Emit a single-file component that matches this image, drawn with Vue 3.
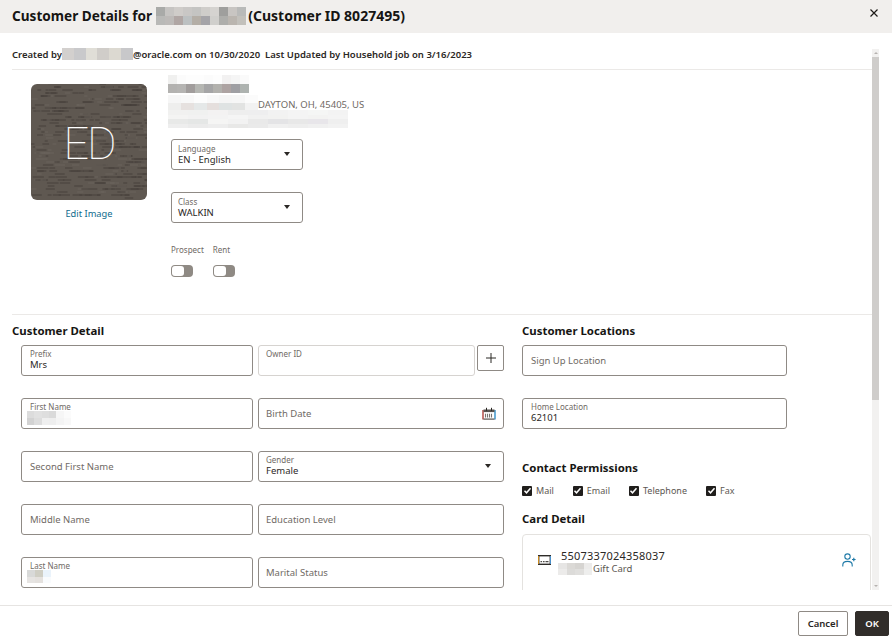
<script setup>
import { ref } from 'vue';

const grain = [];
let seed = 7;
const rnd = () => {
    seed = (seed * 16807) % 2147483647;
    return seed / 2147483647;
};
for (let i = 0; i < 420; i++) {
    const x = rnd() * 116;
    const y = Math.round(rnd() * 38) * 3;
    grain.push({
        x1: x,
        y1: y,
        x2: x + 3 + rnd() * 9,
        y2: y,
        color: rnd() > 0.3 ? '#45403b' : '#6b645d',
    });
}

const titleBlur = [
    '#a9aaa8', '#c6c4c2', '#cfccc9', '#c9c7c5', '#c4c4c2', '#cfcdca', '#d5d3d0', '#9f9f9d', '#c8c5c2', '#b9bab9',
    '#b9b9b7', '#bdbab8', '#b0a6a4', '#bcc0c1', '#b4aea6', '#a5a4a8', '#d0cfcc', '#aeaeab', '#bab5af', '#c2c0bb',
];
const creatorBlur = ['#d3d0ce', '#c9c9cb', '#e0ded7', '#d0cdc9', '#dcd9d1', '#c8c8ca'];
const nameBlur = [
    '#f0f0ef', '#fbfbfb', '#fdfdfd', '#fdfdfd', '#fbfbfb', '#fdfdfd', '#f2f1f1', '#f5f5f5', '#fafafa',
    '#b3b2b0', '#b5b4b2', '#a19d9c', '#b5b6b2', '#a5a5a6', '#b2b1ad', '#ada3a2', '#9f9fa3', '#aeb3b0',
];
const addressBlur = [
    '#f6f6f6', '#f8f8f8', '#fcfcfc', '#f8f8f8', '#f5f5f5', '#f6f6f6', '#fbfbfb',
    '#eeeeed', '#e6e1df', '#e5e8e8', '#e5dfdd', '#dfe3e3', '#e2e3e2', '#f2f2f2',
];
const streetBlur = [
    '#f1f1f0', '#f0f1f0', '#f3f2f2', '#eeeeee', '#eeeeef', '#f2f2f2', '#f4f4f4', '#f5f6f5', '#f3f3f3',
    '#f4f4f3', '#f2f2f2', '#f3f3f3', '#f5f5f5', '#f1f1f1', '#f2f2f1', '#f4f4f4', '#f3f3f2', '#f4f4f4',
    '#e8e9e8', '#e5e7e6', '#f5f5f4', '#f2f2f2', '#e9e9e9', '#e4e4e6', '#e8e8e8', '#e8e6ea', '#efefef',
    '#eeeeee', '#ebebeb', '#ededed', '#e8e8e7', '#eaeaea', '#f0f0f0', '#eeeeee', '#f0f0f0', '#f2f2f2',
];
const firstNameBlur = ['#dcdcdc', '#e1e1e1', '#dedede', '#dadada', '#f6f6f6', '#fbfbfb', '#d2d2d2', '#dddddd', '#efefef', '#eeeeee', '#f4f4f4', '#f8f8f8'];
const lastNameBlur = ['#d8d9d8', '#cfcec4', '#eaf3fb', '#e6e4e2', '#e4e1de', '#f9fbfd'];
const cardBlur = ['#e6e5e4', '#dbd9d6', '#d6d4d1', '#ecebea', '#ecebea', '#dcdbd9', '#e0dfdd', '#eeeeed'];

const permissions = ref(['Mail', 'Email', 'Telephone', 'Fax']);
</script>

<template>
    <div class="dialog">
        <header class="dialog-header">
            <h1>Customer Details for</h1>
            <div class="mosaic title-blur">
                <i v-for="(c, i) in titleBlur" :key="i" :style="{ background: c }"></i>
            </div>
            <h1 class="title-id">(Customer ID 8027495)</h1>
            <svg class="close" viewBox="0 0 10 10" width="10" height="10">
                <path d="M1.5 1.5l7 7M8.5 1.5l-7 7" stroke="#1d1a17" stroke-width="1.2" fill="none" />
            </svg>
        </header>

        <div class="dialog-body">
            <div class="scroll-area">
                <div class="meta-line">
                    <span>Created by</span>
                    <div class="mosaic creator-blur">
                        <i v-for="(c, i) in creatorBlur" :key="i" :style="{ background: c }"></i>
                    </div>
                    <span>@oracle.com on 10/30/2020</span>
                    <span class="meta-updated">Last Updated by Household job on 3/16/2023</span>
                </div>

                <section class="profile">
                    <div class="avatar-col">
                        <div class="avatar">
                            <svg viewBox="0 0 116 116" width="116" height="116">
                                <line v-for="(g, i) in grain" :key="i" :x1="g.x1" :y1="g.y1" :x2="g.x2" :y2="g.y2" :stroke="g.color" stroke-width="0.9" />
                            </svg>
                            <span>ED</span>
                        </div>
                        <a class="edit-image">Edit Image</a>
                    </div>
                    <div class="profile-info">
                        <div class="mosaic name-blur">
                            <i v-for="(c, i) in nameBlur" :key="i" :style="{ background: c }"></i>
                        </div>
                        <div class="address-row">
                            <div class="mosaic address-blur">
                                <i v-for="(c, i) in addressBlur" :key="i" :style="{ background: c }"></i>
                            </div>
                            <span>DAYTON, OH, 45405, US</span>
                        </div>
                        <div class="mosaic street-blur">
                            <i v-for="(c, i) in streetBlur" :key="i" :style="{ background: c }"></i>
                        </div>
                        <div class="field profile-select">
                            <label>Language</label>
                            <p>EN - English</p>
                            <b class="caret"></b>
                        </div>
                        <div class="field profile-select">
                            <label>Class</label>
                            <p>WALKIN</p>
                            <b class="caret"></b>
                        </div>
                        <div class="toggles">
                            <div class="toggle-item">
                                <label>Prospect</label>
                                <div class="switch"><i></i></div>
                            </div>
                            <div class="toggle-item">
                                <label>Rent</label>
                                <div class="switch"><i></i></div>
                            </div>
                        </div>
                    </div>
                </section>

                <section class="details">
                    <div class="details-left">
                        <h2>Customer Detail</h2>
                        <div class="field-grid">
                            <div class="field">
                                <label>Prefix</label>
                                <p>Mrs</p>
                            </div>
                            <div class="owner-row">
                                <div class="field field-muted col-two">
                                    <label>Owner ID</label>
                                </div>
                                <button class="plus">
                                    <svg viewBox="0 0 10 10" width="10" height="10">
                                        <path d="M5 0v10M0 5h10" stroke="#2b2825" stroke-width="1" fill="none" />
                                    </svg>
                                </button>
                            </div>

                            <div class="field">
                                <label>First Name</label>
                                <div class="mosaic first-blur">
                                    <i v-for="(c, i) in firstNameBlur" :key="i" :style="{ background: c }"></i>
                                </div>
                            </div>
                            <div class="field field-empty col-two">
                                <span>Birth Date</span>
                                <svg class="calendar" viewBox="0 0 14 13" width="14" height="13">
                                    <path d="M1 3v9.5" stroke="#a8322c" stroke-width="1.3" />
                                    <path d="M13 3v9.5" stroke="#1f86c4" stroke-width="1.3" />
                                    <rect x="1.5" y="2.5" width="11" height="2.6" fill="#57534f" />
                                    <rect x="1.5" y="11.5" width="11" height="1.2" fill="#57534f" />
                                    <path d="M4.5 .8v3M9.5 .8v3" stroke="#2b2825" stroke-width="1" />
                                    <path d="M3.5 6.8v3.6M5.5 6.8v3.6M7.5 6.8v3.6M9.5 6.8v3.6" stroke="#77736f" stroke-width="1.1" />
                                </svg>
                            </div>

                            <div class="field field-empty">
                                <span>Second First Name</span>
                            </div>
                            <div class="field col-two">
                                <label>Gender</label>
                                <p>Female</p>
                                <b class="caret"></b>
                            </div>

                            <div class="field field-empty">
                                <span>Middle Name</span>
                            </div>
                            <div class="field field-empty col-two">
                                <span>Education Level</span>
                            </div>

                            <div class="field">
                                <label>Last Name</label>
                                <div class="mosaic last-blur">
                                    <i v-for="(c, i) in lastNameBlur" :key="i" :style="{ background: c }"></i>
                                </div>
                            </div>
                            <div class="field field-empty col-two">
                                <span>Marital Status</span>
                            </div>
                        </div>
                    </div>

                    <div class="details-right">
                        <h2>Customer Locations</h2>
                        <div class="location-fields">
                            <div class="field field-empty">
                                <span>Sign Up Location</span>
                            </div>
                            <div class="field">
                                <label>Home Location</label>
                                <p>62101</p>
                            </div>
                        </div>
                        <h2 class="contact-title">Contact Permissions</h2>
                        <div class="permissions">
                            <div v-for="p in permissions" :key="p" class="permission">
                                <span class="check">
                                    <svg viewBox="0 0 9 9" width="9" height="9">
                                        <path d="M1.5 4.8l2 2 4-4.6" stroke="#fff" stroke-width="1.5" fill="none" />
                                    </svg>
                                </span>
                                <span>{{ p }}</span>
                            </div>
                        </div>
                        <h2 class="card-title">Card Detail</h2>
                        <div class="card">
                            <svg class="card-icon" viewBox="0 0 13 10" width="13" height="10">
                                <rect x="0.7" y="0.7" width="11.6" height="8.6" fill="none" stroke="#2f2c29" stroke-width="1.4" />
                                <path d="M2.5 6.6h1.6M5 6.6h1.6M7.5 6.6h3" stroke="#4d4a47" stroke-width="1.2" />
                                <path d="M.5 1v8" stroke="#c98a1e" stroke-width="1" />
                                <path d="M12.5 1v8" stroke="#4a8fc9" stroke-width="1" />
                            </svg>
                            <div class="card-text">
                                <div class="card-number">5507337024358037</div>
                                <div class="card-type">
                                    <div class="mosaic card-blur">
                                        <i v-for="(c, i) in cardBlur" :key="i" :style="{ background: c }"></i>
                                    </div>
                                    <span>Gift Card</span>
                                </div>
                            </div>
                            <svg class="person-icon" viewBox="0 0 14 14" width="14" height="14">
                                <circle cx="5.5" cy="3.6" r="2.7" fill="none" stroke="#1f7aa8" stroke-width="1.1" />
                                <path d="M.8 13.5V12c0-2.4 2-3.6 4.7-3.6s4.7 1.2 4.7 3.6v1.5" fill="none" stroke="#1f7aa8" stroke-width="1.1" />
                                <path d="M10 6.5h3.6M11.8 4.7v3.6" stroke="#1f7aa8" stroke-width="1.2" />
                            </svg>
                        </div>
                    </div>
                </section>
            </div>
            <div class="scrollbar">
                <b class="arrow-up"></b>
                <div class="thumb"></div>
                <b class="arrow-down"></b>
            </div>
        </div>

        <footer class="dialog-footer">
            <button class="btn">Cancel</button>
            <button class="btn btn-primary">OK</button>
        </footer>
    </div>
</template>

<style>
html, body {
    margin: 0;
    background: #fff;
}
</style>

<style scoped>
.dialog {
    width: 892px;
    height: 638px;
    display: flex;
    flex-direction: column;
    overflow: hidden;
    font-family: "Noto Sans", "Open Sans", sans-serif;
    color: #2b2825;
    background: #fff;
}

.dialog-header {
    height: 33px;
    flex: none;
    box-sizing: border-box;
    display: flex;
    align-items: center;
    padding: 0 12px 2px;
    background: #f1efed;
}

.dialog-header h1 {
    margin: 0;
    font-size: 13.6px;
    font-weight: 700;
    color: #161513;
}

.dialog-header h1.title-id {
    font-size: 14px;
}

.close {
    margin-left: auto;
    margin-right: 1px;
    margin-bottom: 5px;
}

.mosaic {
    display: grid;
}

.mosaic i {
    display: block;
}

.title-blur {
    width: 90px;
    height: 18px;
    margin: 1px 2px 0 4px;
    grid-template-columns: repeat(10, 1fr);
    grid-template-rows: 1fr 1fr;
}

.dialog-body {
    flex: none;
    height: 572px;
    box-sizing: border-box;
    display: flex;
    padding: 0 13px 15px 0;
}

.scroll-area {
    flex: 1;
    min-width: 0;
    overflow: hidden;
    padding-left: 12px;
}

.meta-line {
    height: 37px;
    display: flex;
    align-items: flex-end;
    padding-bottom: 8px;
    font-size: 9.5px;
    line-height: 13px;
    font-weight: 600;
    color: #2b2825;
    border-bottom: 1px solid #ebe9e7;
    box-sizing: border-box;
}

.creator-blur {
    width: 71px;
    height: 12px;
    grid-template-columns: repeat(6, 1fr);
    margin-bottom: 1px;
}

.meta-updated {
    margin-left: 5px;
}

.profile {
    height: 245px;
    display: flex;
    align-items: flex-start;
    padding-left: 19px;
    border-bottom: 1px solid #ebe9e7;
    box-sizing: border-box;
}

.avatar-col {
    width: 116px;
    padding-top: 14px;
    display: flex;
    flex-direction: column;
    align-items: center;
}

.avatar {
    position: relative;
    width: 116px;
    height: 116px;
    border-radius: 6px;
    overflow: hidden;
    background: #5f5851;
}

.avatar svg {
    display: block;
}

.avatar span {
    position: absolute;
    inset: 0;
    display: flex;
    align-items: center;
    justify-content: center;
    padding-top: 3px;
    font-size: 45px;
    font-weight: 100;
    letter-spacing: -2px;
    font-family: Roboto, Lato, sans-serif;
    color: #fff;
}

.edit-image {
    margin-top: 7px;
    font-size: 9.3px;
    color: #0f6b8e;
}

.profile-info {
    margin-left: 21px;
    padding-top: 5px;
}

.name-blur {
    width: 81px;
    height: 18px;
    grid-template-columns: repeat(9, 1fr);
    grid-template-rows: 1fr 1fr;
}

.address-row {
    height: 15px;
    margin-top: 2px;
    display: flex;
    align-items: flex-end;
    font-size: 9.5px;
    line-height: 10px;
    color: #6f6a65;
}

.address-blur {
    width: 90px;
    height: 15px;
    grid-template-columns: repeat(7, 1fr);
    grid-template-rows: 1fr 1fr;
}

.street-blur {
    width: 180px;
    height: 18px;
    grid-template-columns: repeat(9, 1fr);
    grid-template-rows: repeat(4, 1fr);
}

.field {
    position: relative;
    height: 31px;
    box-sizing: border-box;
    padding: 2px 8px 0;
    background: #fff;
    border: 1px solid #8f8a85;
    border-radius: 3px;
}

.col-two {
    padding-left: 7px;
}

.field label {
    display: block;
    font-size: 8px;
    line-height: 11px;
    color: #6f6a65;
}

.field p {
    margin: 0;
    font-size: 9.5px;
    line-height: 11px;
    color: #2b2825;
}

.field-muted {
    flex: 1;
    border-color: #d6d3d0;
}

.field-empty {
    display: flex;
    align-items: center;
    padding-top: 0;
    font-size: 9.5px;
    color: #6f6a65;
}

.profile-select {
    width: 132px;
    margin: 0 0 22px 3px;
    padding-left: 6px;
    padding-top: 3px;
}

.street-blur + .profile-select {
    margin-top: 11px;
}

.caret {
    position: absolute;
    right: 12px;
    top: 12px;
    border-left: 3.5px solid transparent;
    border-right: 3.5px solid transparent;
    border-top: 4px solid #2b2825;
}

.toggles {
    display: flex;
    gap: 9px;
    margin-left: 3px;
    margin-top: -1px;
}

.toggle-item {
    display: flex;
    flex-direction: column;
    gap: 10px;
}

.toggle-item label {
    font-size: 8px;
    line-height: 11px;
    color: #6f6a65;
}

.switch {
    width: 22px;
    height: 12px;
    box-sizing: border-box;
    padding: 1px;
    background: #8f8a84;
    border-radius: 4px;
}

.switch i {
    display: block;
    width: 12px;
    height: 10px;
    background: #fff;
    border-radius: 3px;
}

.details {
    display: flex;
}

.details-left {
    width: 510px;
}

.details h2 {
    margin: 7px 0 0;
    font-size: 11.4px;
    line-height: 17px;
    font-weight: 700;
    color: #161513;
}

.field-grid {
    display: grid;
    grid-template-columns: 232px 246px;
    gap: 22px 5px;
    margin: 6px 0 0 9px;
}

.owner-row {
    display: flex;
    align-items: flex-start;
    gap: 2px;
}

.plus {
    width: 27px;
    height: 26px;
    padding: 0;
    flex: none;
    display: flex;
    align-items: center;
    justify-content: center;
    background: #fff;
    border: 1px solid #8f8a85;
    border-radius: 2px;
}

.calendar {
    position: absolute;
    right: 7px;
    top: 8px;
}

.first-blur {
    position: absolute;
    left: 5px;
    top: 12px;
    width: 44px;
    height: 14px;
    grid-template-columns: repeat(6, 1fr);
    grid-template-rows: 1fr 1fr;
}

.last-blur {
    position: absolute;
    left: 5px;
    top: 12px;
    width: 24px;
    height: 13px;
    grid-template-columns: repeat(3, 1fr);
    grid-template-rows: 1fr 1fr;
}

.details-right {
    flex: 1;
    min-width: 0;
}

.location-fields {
    width: 265px;
    display: grid;
    gap: 22px;
    margin-top: 6px;
}

.details h2.contact-title {
    margin-top: 30px;
}

.permissions {
    display: flex;
    gap: 19px;
    margin-top: 8px;
}

.permission {
    display: flex;
    align-items: center;
    gap: 4px;
    font-size: 9px;
    line-height: 13px;
    color: #5c5752;
}

.check {
    width: 10px;
    height: 10px;
    display: flex;
    align-items: center;
    justify-content: center;
    background: #201e1c;
    border-radius: 1px;
}

.details h2.card-title {
    margin-top: 13px;
}

.card {
    position: relative;
    width: 349px;
    height: 80px;
    box-sizing: border-box;
    margin-top: 7px;
    padding: 14px 14px 14px 15px;
    display: flex;
    align-items: flex-start;
    border: 1px solid #e4e2df;
    border-radius: 4px;
}

.card-icon {
    margin-top: 6px;
}

.card-text {
    margin-left: 10px;
}

.card-number {
    font-size: 11px;
    line-height: 13px;
    letter-spacing: 0.2px;
}

.card-type {
    display: flex;
    align-items: center;
    font-size: 9.5px;
    line-height: 13px;
    color: #5c5752;
    margin-left: -3px;
}

.card-blur {
    width: 34px;
    height: 12px;
    margin-right: 1px;
    grid-template-columns: repeat(4, 1fr);
    grid-template-rows: 1fr 1fr;
}

.person-icon {
    margin-left: auto;
    margin-top: 4px;
}

.scrollbar {
    flex: none;
    width: 7px;
    height: 541px;
    margin-top: 16px;
    background: #f2f1f0;
    display: flex;
    flex-direction: column;
    align-items: center;
}

.arrow-up {
    margin: 3px 0;
    border-left: 2px solid transparent;
    border-right: 2px solid transparent;
    border-bottom: 2px solid #b5b2af;
}

.thumb {
    width: 7px;
    height: 343px;
    background: #cfcdcb;
}

.arrow-down {
    margin-top: auto;
    margin-bottom: 3px;
    border-left: 2px solid transparent;
    border-right: 2px solid transparent;
    border-top: 2px solid #b5b2af;
}

.dialog-footer {
    flex: none;
    height: 33px;
    box-sizing: border-box;
    border-top: 1px solid #e6e4e2;
    padding: 5px 3px 0 0;
    display: flex;
    justify-content: flex-end;
    align-items: flex-start;
    gap: 7px;
}

.btn {
    height: 25px;
    width: 50px;
    padding: 0;
    font-family: inherit;
    font-size: 9.5px;
    font-weight: 600;
    color: #2b2825;
    background: #fff;
    border: 1px solid #8f8a85;
    border-radius: 2px;
}

.btn-primary {
    width: 34px;
    background: #312d2a;
    border-color: #312d2a;
    color: #fff;
}
</style>
